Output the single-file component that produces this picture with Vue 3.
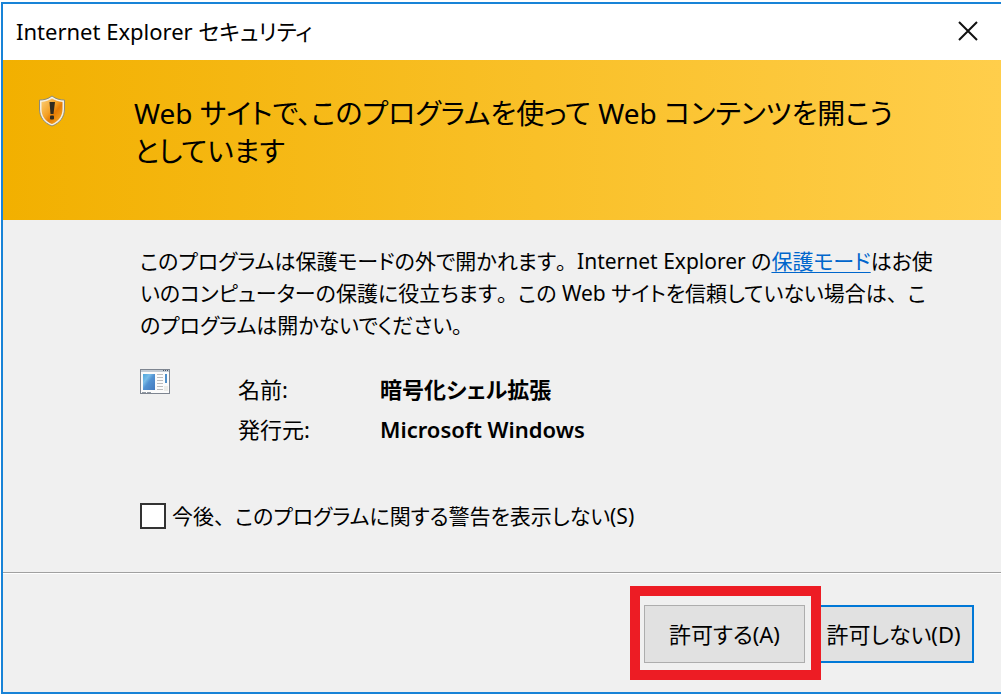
<template>
  <div class="page">
    <section class="dialog" role="dialog" aria-labelledby="dialog-title">
      <header class="title-bar">
        <span id="dialog-title">Internet Explorer セキュリティ</span>
        <button class="close" type="button" aria-label="閉じる">
          <svg width="20" height="20" viewBox="0 0 20 20">
            <path d="M1 1 19 19M19 1 1 19" stroke="#111" stroke-width="2" />
          </svg>
        </button>
      </header>

      <div class="banner">
        <svg class="shield" width="28" height="32" viewBox="0 0 28 32">
          <defs>
            <linearGradient id="shield-fill" x1="0" y1="0" x2="1" y2="1">
              <stop offset="0" stop-color="#fbd07a" />
              <stop offset="0.45" stop-color="#f4a024" />
              <stop offset="0.6" stop-color="#e67c04" />
              <stop offset="1" stop-color="#fbb52c" />
            </linearGradient>
          </defs>
          <path d="M14 1C10 4 6 5 1.500 5V14C1.500 22 6 28 14 31C22 28 26.500 22 26.500 14V5C22 5 18 4 14 1Z" fill="#f4efe2" stroke="#8d8a78" />
          <path d="M14 3.500C11 5.500 8 6.500 3.500 7V14C3.500 21 7.500 26.500 14 29C20.500 26.500 24.500 21 24.500 14V7C20 6.500 17 5.500 14 3.500Z" fill="url(#shield-fill)" />
          <path d="M11.500 7H17L15.500 19H12.500Z" fill="#302b20" />
          <rect x="12" y="20.500" width="4" height="4" rx="1" fill="#302b20" />
        </svg>
        <h1>Web サイトで、このプログラムを使って Web コンテンツを開こう<br />としています</h1>
      </div>

      <main class="content">
        <p class="message">
          このプログラムは保護モードの外で開かれます<span class="stop">。</span>Internet Explorer の<a href="#">保護モード</a>はお使<br />
          いのコンピューターの保護に役立ちます<span class="stop">。</span>この Web サイトを信頼していない場合は<span class="stop">、</span>こ<br />
          のプログラムは開かないでください<span class="stop">。</span>
        </p>

        <div class="program">
          <svg class="program-icon" width="30" height="26" viewBox="0 0 30 26">
            <defs>
              <linearGradient id="pane-fill" x1="0" y1="0" x2="1" y2="1">
                <stop offset="0" stop-color="#4da6dc" />
                <stop offset="0.3" stop-color="#79bce8" />
                <stop offset="0.5" stop-color="#5292d2" />
                <stop offset="1" stop-color="#4379bd" />
              </linearGradient>
            </defs>
            <rect x="0.500" y="0.500" width="29" height="24" fill="#fbfbfb" stroke="#7e8590" />
            <path d="M1 1H29V3H1Z" fill="#c3cbd4" />
            <path d="M23 1h1v1h-1zM25 1h1v1h-1zM27 1h1v1h-1z" fill="#4d5868" />
            <rect x="3" y="5" width="12" height="16" fill="url(#pane-fill)" />
            <path d="M17 5.500h6M17 8.500h6M17 11.500h6M17 14.500h6M17 17.500h6M17 20.500h6" stroke="#bcbcbc" />
            <rect x="25" y="5" width="2" height="9" fill="#4e8fca" />
            <rect x="24" y="17" width="4" height="5" fill="#ececE8" />
            <path d="M2 23.500h4M7 23.500h4" stroke="#929aa4" />
          </svg>
          <dl>
            <dt>名前:</dt>
            <dd>暗号化シェル拡張</dd>
            <dt>発行元:</dt>
            <dd>Microsoft Windows</dd>
          </dl>
        </div>

        <label class="remember">
          <input v-model="remember" type="checkbox" />
          <span>今後<span class="stop">、</span>このプログラムに関する警告を表示しない(S)</span>
        </label>
      </main>

      <footer class="actions">
        <div class="highlight">
          <button class="btn" type="button">許可する(A)</button>
        </div>
        <button class="btn btn-default" type="button">許可しない(D)</button>
      </footer>
    </section>
  </div>
</template>

<script setup>
import { ref } from 'vue';

const remember = ref(false);
</script>

<style>
body {
  background: #fff;
}
</style>

<style scoped>
.page {
  padding: 2px 0 2px 1px;
  overflow: hidden;
  font-family: 'Noto Sans', 'Noto Sans CJK JP', sans-serif;
  font-size: 22px;
  line-height: 32px;
  font-feature-settings: 'palt';
  color: #000;
}

.dialog {
  border: 2px solid #1883d7;
  border-right: 0;
  background: #f0f0f0;
}

.title-bar {
  display: flex;
  align-items: center;
  justify-content: space-between;
  box-sizing: border-box;
  height: 56px;
  padding: 0 23px 2px 13px;
  background: #fff;
}

.close {
  display: flex;
  padding: 0;
  border: 0;
  background: none;
}

.banner {
  display: flex;
  gap: 68px;
  box-sizing: border-box;
  min-height: 160px;
  padding: 34px 0 0 35px;
  background: linear-gradient(to right, #f2b000, #ffce4b);
}

.shield {
  flex: none;
  margin-top: 1px;
}

h1 {
  margin: 0;
  font-size: 28px;
  font-weight: 400;
  line-height: 38px;
  white-space: nowrap;
}

.content {
  padding: 25px 0 40px 137px;
}

.message {
  margin: 0;
  font-size: 21px;
  white-space: nowrap;
}

/* punctuation keeps its full-width space */
.stop {
  font-feature-settings: normal;
}

.message a {
  color: #0066cc;
  text-underline-offset: 3px;
  text-decoration-thickness: 1px;
}

.program {
  display: flex;
  gap: 68px;
  margin-top: 28px;
}

.program-icon {
  flex: none;
}

dl {
  display: grid;
  grid-template-columns: 142px auto;
  margin: 0;
  line-height: 40px;
}

dd {
  margin: 0;
  font-weight: 600;
}

.remember {
  display: flex;
  align-items: center;
  gap: 6px;
  width: fit-content;
  margin-top: 51px;
  font-size: 21px;
}

.remember input {
  appearance: none;
  width: 26px;
  height: 26px;
  margin: 0;
  border: 2px solid #333;
  background: #fff;
}

.remember input:checked {
  background: #333;
  box-shadow: inset 0 0 0 4px #fff;
}

.actions {
  display: flex;
  justify-content: flex-end;
  gap: 8px;
  padding: 32px 27px 29px;
  border-top: 1px solid #a0a0a0;
  box-shadow: inset 0 1px #fff;
}

.btn {
  width: 161px;
  height: 58px;
  padding: 0;
  border: 1px solid #adadad;
  background: #e1e1e1;
  color: #000;
  font: inherit;
  font-feature-settings: inherit;
}

.btn-default {
  border: 2px solid #0078d7;
}

.highlight {
  position: relative;
}

/* red marker frame drawn over the button and its neighbour's edge */
.highlight::after {
  content: '';
  position: absolute;
  inset: -19px -16px -17px -14px;
  border: 10px solid #ed1c24;
  pointer-events: none;
}
</style>
